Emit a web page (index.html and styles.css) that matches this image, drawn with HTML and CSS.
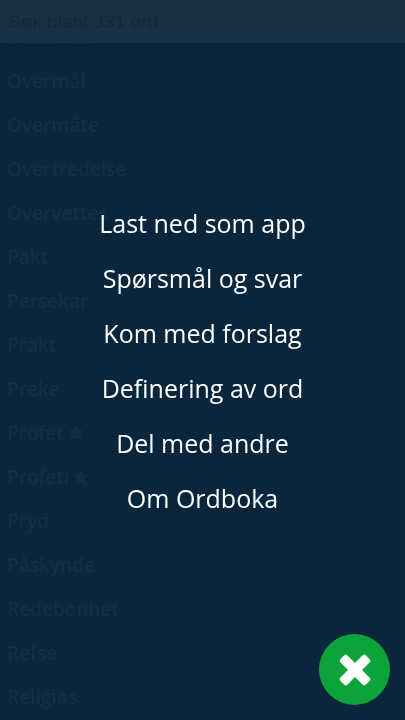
FILE: index.html
```html
<!DOCTYPE html>
<html lang="no">
<head>
<meta charset="utf-8">
<meta name="viewport" content="width=device-width, initial-scale=1">
<title>Ordboka</title>
<link rel="stylesheet" href="styles.css">
</head>
<body>
<header class="search">
  <input class="search-input" type="search" placeholder="Søk blant 331 ord" aria-label="Søk blant 331 ord">
</header>
<main>
  <ul class="words">
    <li>Overmod</li>
    <li>Overmål</li>
    <li>Overmåte</li>
    <li>Overtredelse</li>
    <li>Overvettes</li>
    <li>Pakt</li>
    <li>Persekar</li>
    <li>Prakt</li>
    <li>Preke</li>
    <li>Profet <svg class="star" viewBox="1 1 22 22" aria-hidden="true"><path d="M12 2l3 6.400 7 .9-5.100 4.900 1.300 7L12 17.800 5.800 21.200l1.300-7L2 9.300l7-.9z"/></svg></li>
    <li>Profeti <svg class="star" viewBox="1 1 22 22" aria-hidden="true"><path d="M12 2l3 6.400 7 .9-5.100 4.900 1.300 7L12 17.800 5.800 21.200l1.300-7L2 9.300l7-.9z"/></svg></li>
    <li>Pryd</li>
    <li>Påskynde</li>
    <li>Redebonhet</li>
    <li>Refse</li>
    <li>Religiøs</li>
  </ul>
</main>
<nav class="menu" aria-label="Meny">
  <a href="#app">Last ned som app</a>
  <a href="#svar">Spørsmål og svar</a>
  <a href="#forslag">Kom med forslag</a>
  <a href="#definering">Definering av ord</a>
  <a href="#del">Del med andre</a>
  <a href="#om">Om Ordboka</a>
</nav>
<button class="close" type="button" aria-label="Lukk meny">
  <svg viewBox="0 0 32 32" aria-hidden="true"><g transform="rotate(45 16 16)"><rect x="-2" y="11" width="36" height="10" rx="2.500"/><rect x="11" y="-2" width="10" height="36" rx="2.500"/></g></svg>
</button>
</body>
</html>
```
FILE: styles.css
```css
* {
  box-sizing: border-box;
}

body {
  margin: 0;
  height: 100vh;
  overflow: hidden;
  background: #09263c;
  color: #142f45;
  font-family: "Open Sans", "Noto Sans", sans-serif;
}

.search {
  position: fixed;
  top: 0;
  left: 0;
  right: 0;
  z-index: 1;
  background: #183145;
}

.search-input {
  display: block;
  width: 100%;
  height: 43px;
  padding: 0 8px;
  border: 0;
  background: transparent;
  color: #10293e;
  font: 19px "Liberation Sans", Arial, sans-serif;
}

.search-input::placeholder {
  color: #10293e;
  opacity: 1;
}

.words {
  list-style: none;
  margin: 0;
  padding: 15px 7px 0;
  font-size: 19px;
  font-weight: 600;
  line-height: 44px;
}

.words li {
  display: flex;
  align-items: center;
  gap: 4px;
}

.star {
  width: 16px;
  height: 16px;
  fill: currentColor;
  stroke: currentColor;
  stroke-linejoin: round;
}

.menu {
  position: fixed;
  inset: 0;
  z-index: 2;
  display: flex;
  flex-direction: column;
  align-items: center;
  justify-content: center;
  padding-top: 2px;
}

.menu a {
  color: #fff;
  font-size: 25px;
  line-height: 55px;
  text-decoration: none;
}

.close {
  position: fixed;
  right: 15px;
  bottom: 15px;
  z-index: 3;
  display: grid;
  place-items: center;
  width: 71px;
  height: 71px;
  padding: 0;
  border: 0;
  border-radius: 50%;
  background: #0ba33a;
}

.close svg {
  width: 32px;
  height: 32px;
  fill: #fff;
}
```
